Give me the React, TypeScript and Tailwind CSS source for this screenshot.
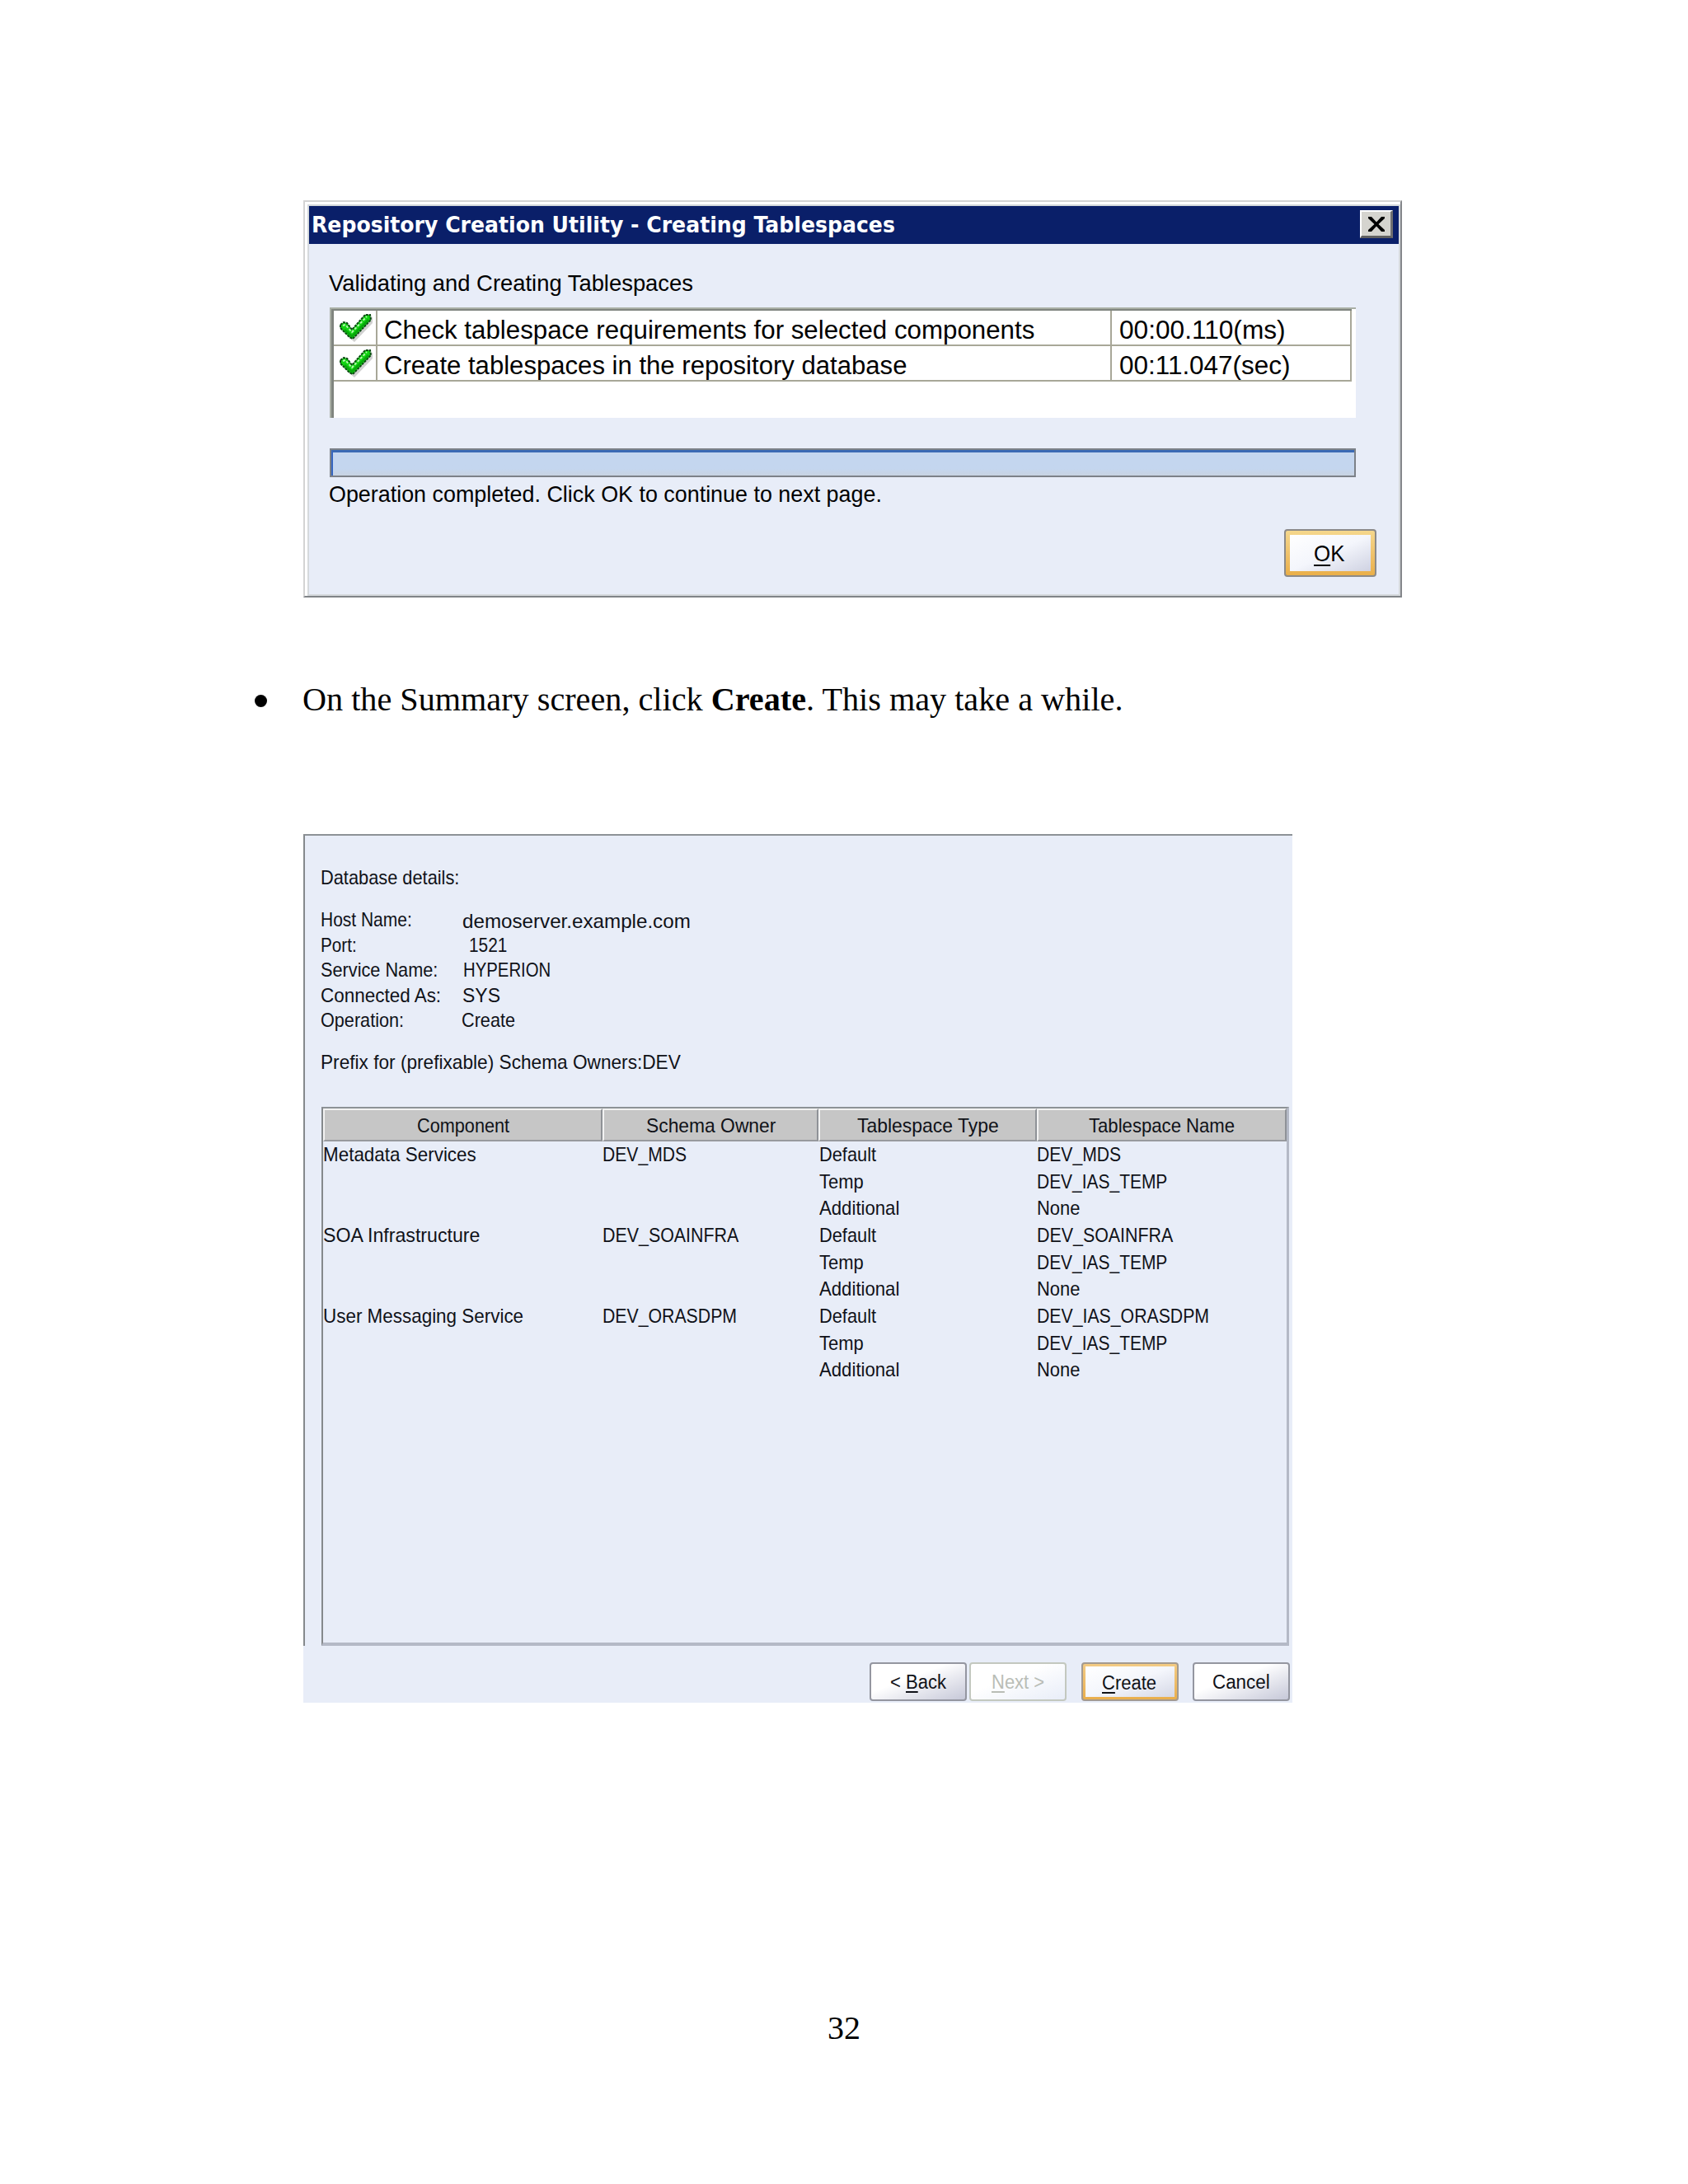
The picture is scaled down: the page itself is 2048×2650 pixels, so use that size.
import React, { useLayoutEffect, useRef, useState } from "react";

const SANS = "font-['Liberation_Sans',Arial,sans-serif]";

/* A single line of text condensed or widened to occupy exactly `w` pixels. */
function Fit({ w, className = "", children }: { w: number; className?: string; children: React.ReactNode }) {
  const ref = useRef<HTMLSpanElement>(null);
  const [scale, setScale] = useState(1);
  useLayoutEffect(() => {
    if (ref.current && ref.current.offsetWidth) setScale(w / ref.current.offsetWidth);
  }, [w]);
  return (
    <span className={`block shrink-0 whitespace-pre ${className}`} style={{ width: w }}>
      <span ref={ref} className="inline-block origin-left" style={{ transform: `scaleX(${scale})` }}>
        {children}
      </span>
    </span>
  );
}

function Check() {
  return (
    <svg width="42" height="36" viewBox="0 0 42 36" className="block">
      <path d="M5 17 L9 13 L17 21 L34 4 L41 5 L41 12 L19 35 L13 30 Z" fill="#9a9a9a" opacity="0.45" />
      <path d="M2 14 L6 11 L10 12 L16 20 L32 2 L38 2 L39 8 L17 31 L13 29 L2 18 Z" fill="#12d412" stroke="#0b4a12" strokeWidth="2" strokeDasharray="3 1" />
      <path d="M5 15 L8 14 L16 23 L34 4" fill="none" stroke="#b4f7ae" strokeWidth="2" strokeDasharray="3 2" />
      <path d="M7 20 L16 28 L36 8" fill="none" stroke="#08a80c" strokeWidth="2.5" />
    </svg>
  );
}

const steps = [
  { label: "Check tablespace requirements for selected components", lw: 789, time: "00:00.110(ms)", tw: 202 },
  { label: "Create tablespaces in the repository database", lw: 634, time: "00:11.047(sec)", tw: 208 },
];

function ProgressDialog() {
  return (
    <section className={`ml-[368px] flex h-[482px] w-[1333px] border-t-2 border-r-2 border-b-2 border-l-2 border-t-[#d4d4d4] border-l-[#d4d4d4] border-r-[#84868a] border-b-[#808488] bg-white pt-[3px] pl-[3px] text-black ${SANS}`}>
      <div className="flex w-full flex-col border-2 border-[#d5d9dc] bg-[#e8edf8]">
        <header className="flex h-[46px] shrink-0 items-center justify-between bg-[#0a1f69] pr-[7px] pl-[3px]">
          <Fit w={708} className="font-['DejaVu_Sans',sans-serif] text-[26px] leading-[46px] font-bold text-white">
            Repository Creation Utility - Creating Tablespaces
          </Fit>
          <button className="mb-[2px] flex h-[34px] w-[40px] items-center justify-center border-t-2 border-r-3 border-b-3 border-l-2 border-t-white border-l-white border-r-[#707070] border-b-[#606060] bg-[#d5d4cf]">
            <svg width="20" height="18" viewBox="0 0 20 18">
              <path d="M0 0 H4 L10 6.5 L16 0 H20 V2 L12.5 9 L20 16 V18 H16 L10 11.5 L4 18 H0 V16 L7.5 9 L0 2 Z" fill="#000" />
            </svg>
          </button>
        </header>
        <div className="flex flex-col pt-[33px] pr-[26px] pl-[25px]">
          <Fit w={442} className="-ml-px text-[28px] leading-[30px]">Validating and Creating Tablespaces</Fit>
          <div className="mt-[14px] h-[134px] w-[1245px] border-t-2 border-l-2 border-[#a9afa5] bg-white">
            <div className="h-full w-[1238px] border-t-2 border-l-3 border-[#80857f]">
              {steps.map((s) => (
                <div key={s.label} className="flex h-[43px] border-b-2 border-[#a8a798]">
                  <div className="w-[53px] border-r-2 border-[#a8a798] pt-[3px] pl-[6px]">
                    <Check />
                  </div>
                  <div className="w-[891px] border-r-2 border-[#a8a798] pl-[8px]">
                    <Fit w={s.lw} className="text-[31px] leading-[47px]">{s.label}</Fit>
                  </div>
                  <div className="w-[291px] border-r-2 border-[#a8a798] pl-[9px]">
                    <Fit w={s.tw} className="text-[31px] leading-[47px]">{s.time}</Fit>
                  </div>
                </div>
              ))}
            </div>
          </div>
          <div className="mt-[37px] h-[35px] w-[1245px] border-2 border-[#7c8188]">
            <div className="h-full border-t-3 border-l-2 border-t-[#3a6ab4] border-l-[#3565c0] bg-linear-to-b from-[#c4d6ef] from-70% to-[#c8d3e2]" />
          </div>
          <Fit w={671} className="mt-[6px] -ml-px text-[28px] leading-[30px]">Operation completed. Click OK to continue to next page.</Fit>
          <button className="mt-[27px] ml-[1158px] h-[58px] w-[112px] rounded-[4px] border-2 border-[#8c8a88] bg-linear-to-b from-[#f5d78c] to-[#eaaf48] p-[5px]">
            <span className="flex h-full items-center justify-center bg-linear-to-br from-white via-[#f4f6fc] to-[#cfd2e2] pt-[2px] pr-[3px]">
              <Fit w={37} className="text-[28px] leading-[46px]">
                <span className="underline decoration-2 underline-offset-[4px]">O</span>K
              </Fit>
            </span>
          </button>
        </div>
      </div>
    </section>
  );
}

const details = [
  { label: "Host Name:", lw: 111, value: "demoserver.example.com", vw: 277, cls: "pl-[1px] pt-[2px]" },
  { label: "Port:", lw: 44, value: "1521", vw: 46, cls: "pl-[9px]" },
  { label: "Service Name:", lw: 142, value: "HYPERION", vw: 106, cls: "pl-[2px]" },
  { label: "Connected As:", lw: 146, value: "SYS", vw: 46, cls: "pl-[1px]" },
  { label: "Operation:", lw: 101, value: "Create", vw: 65, cls: "pl-0" },
];

const headers = [
  { label: "Component", w: 112 },
  { label: "Schema Owner", w: 157 },
  { label: "Tablespace Type", w: 172 },
  { label: "Tablespace Name", w: 177 },
];

const rows: { text: string; w: number }[][] = [
  [{ text: "Metadata Services", w: 186 }, { text: "DEV_MDS", w: 102 }, { text: "Default", w: 69 }, { text: "DEV_MDS", w: 102 }],
  [{ text: "", w: 0 }, { text: "", w: 0 }, { text: "Temp", w: 54 }, { text: "DEV_IAS_TEMP", w: 158 }],
  [{ text: "", w: 0 }, { text: "", w: 0 }, { text: "Additional", w: 97 }, { text: "None", w: 52 }],
  [{ text: "SOA Infrastructure", w: 190 }, { text: "DEV_SOAINFRA", w: 165 }, { text: "Default", w: 69 }, { text: "DEV_SOAINFRA", w: 165 }],
  [{ text: "", w: 0 }, { text: "", w: 0 }, { text: "Temp", w: 54 }, { text: "DEV_IAS_TEMP", w: 158 }],
  [{ text: "", w: 0 }, { text: "", w: 0 }, { text: "Additional", w: 97 }, { text: "None", w: 52 }],
  [{ text: "User Messaging Service", w: 243 }, { text: "DEV_ORASDPM", w: 163 }, { text: "Default", w: 69 }, { text: "DEV_IAS_ORASDPM", w: 209 }],
  [{ text: "", w: 0 }, { text: "", w: 0 }, { text: "Temp", w: 54 }, { text: "DEV_IAS_TEMP", w: 158 }],
  [{ text: "", w: 0 }, { text: "", w: 0 }, { text: "Additional", w: 97 }, { text: "None", w: 52 }],
];

const COLS = "grid grid-cols-[339px_262px_265px_303px]";

function WizardButton({ children, w, className = "" }: { children: React.ReactNode; w: number; className?: string }) {
  return (
    <button className={`flex h-[47px] w-[118px] items-center justify-center rounded-[4px] border-2 border-[#9496a0] bg-linear-to-br from-white from-40% to-[#c6c8d8] pt-[2px] ${className}`}>
      <Fit w={w} className="text-[23px] leading-[43px]">{children}</Fit>
    </button>
  );
}

function SummaryPanel() {
  return (
    <section className={`ml-[368px] h-[1054px] w-[1200px] bg-[#e8edf8] text-[24px] leading-[30px] text-[#101218] ${SANS}`}>
      <div className="h-[985px] border-t-2 border-l-2 border-t-[#8d9296] border-l-[#85898c] pt-[36px] pl-[19px]">
        <Fit w={168}>Database details:</Fit>
        <div className="mt-[21px]">
          {details.map((d) => (
            <div key={d.label} className="flex h-[30.5px]">
              <div className="w-[171px]">
                <Fit w={d.lw}>{d.label}</Fit>
              </div>
              <div className={d.cls}>
                <Fit w={d.vw}>{d.value}</Fit>
              </div>
            </div>
          ))}
        </div>
        <Fit w={437} className="mt-[20.5px]">Prefix for (prefixable) Schema Owners:DEV</Fit>
        <div className="mt-[39px] ml-px h-[654px] w-[1174px] border-t-2 border-r-3 border-b-4 border-l-2 border-t-[#8d9296] border-r-[#b4b9c6] border-b-[#b4b9c6] border-l-[#85898c]">
          <div className={COLS}>
            {headers.map((h) => (
              <div key={h.label} className="flex h-[40px] justify-center border-t-2 border-r-2 border-b-2 border-l-2 border-t-[#f2f2f2] border-l-[#f2f2f2] border-r-[#8f9297] border-b-[#989a9e] bg-[#c6c6c6] leading-[38px]">
                <Fit w={h.w}>{h.label}</Fit>
              </div>
            ))}
          </div>
          {rows.map((r, i) => (
            <div key={i} className={`${COLS} h-[32.67px] leading-[32px]`}>
              {r.map((c, j) => (
                <div key={j} className={j === 2 ? "pl-px" : ""}>
                  {c.text && <Fit w={c.w}>{c.text}</Fit>}
                </div>
              ))}
            </div>
          ))}
        </div>
      </div>
      <div className="flex justify-end pt-[20px] pr-[3px]">
        <WizardButton w={68}>
          &lt; <span className="underline decoration-2 underline-offset-[3px]">B</span>ack
        </WizardButton>
        <WizardButton w={64} className="ml-[3px] border-[#c3c8bf] from-[#e8edf8] to-[#e8edf8] text-[#b9bdb6]">
          <span className="underline decoration-2 underline-offset-[3px]">N</span>ext &gt;
        </WizardButton>
        <button className="ml-[18px] h-[47px] w-[118px] rounded-[4px] border-2 border-[#a39a90] bg-linear-to-b from-[#f3cb83] to-[#e9ae4c] p-[3px]">
          <span className="flex h-full items-center justify-center bg-linear-to-br from-white via-[#f4f6fc] to-[#d5d8e6] pt-[2px] pr-[2px]">
            <Fit w={66} className="text-[23px] leading-[40px]">
              <span className="underline decoration-2 underline-offset-[3px]">C</span>reate
            </Fit>
          </span>
        </button>
        <WizardButton w={70} className="ml-[17px]">Cancel</WizardButton>
      </div>
    </section>
  );
}

export default function App() {
  return (
    <main className="flex h-[2650px] w-[2048px] flex-col overflow-hidden bg-white pt-[243px] text-black">
      <ProgressDialog />
      <div className="mt-[101px] flex h-[46px] items-center pl-[309px] font-['Liberation_Serif','Times_New_Roman',serif] text-[40px] leading-[46px]">
        <span className="mt-[3px] mr-[43px] size-[15px] rounded-full bg-black" />
        <Fit w={995}>
          On the Summary screen, click <b>Create</b>. This may take a while.
        </Fit>
      </div>
      <div className="mt-[140px]">
        <SummaryPanel />
      </div>
      <footer className="mt-[372px] text-center font-['Liberation_Serif','Times_New_Roman',serif] text-[40px] leading-[46px]">32</footer>
    </main>
  );
}
